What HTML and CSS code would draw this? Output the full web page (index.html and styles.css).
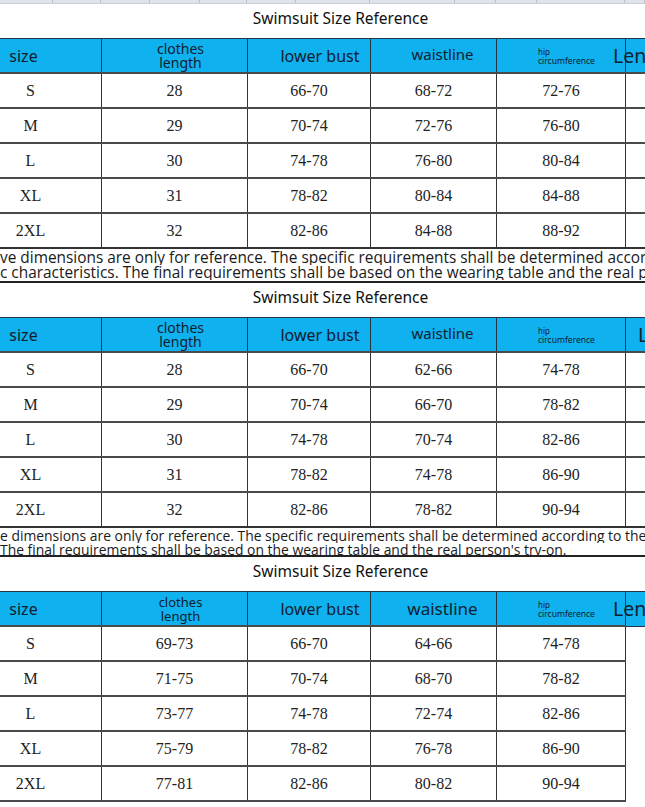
FILE: index.html
```html
<!DOCTYPE html>
<html lang="en">
<head>
<meta charset="utf-8">
<title>Swimsuit Size Reference</title>
<link rel="stylesheet" href="styles.css">
</head>
<body>
<div class="sheet">
  <div class="strip">
    <span></span><span></span><span></span><span></span><span></span><span></span>
    <span></span><span></span><span></span><span></span><span></span><span></span>
  </div>

  <section class="block">
    <h2 class="title">Swimsuit Size Reference</h2>
    <table class="size-table">
      <colgroup>
        <col class="w1"><col class="w2"><col class="w3"><col class="w4"><col class="w5"><col class="w6">
      </colgroup>
      <thead>
        <tr>
          <th><div class="hc h-size">size</div></th>
          <th><div class="hc h-len">clothes<br>length</div></th>
          <th><div class="hc h-bust">lower bust</div></th>
          <th><div class="hc h-waist">waistline</div></th>
          <th><div class="hc h-hip"><span class="hip-a">hip</span><span class="hip-b">circumference</span></div></th>
          <th><div class="hc h-extra shift-left">Length</div></th>
        </tr>
      </thead>
      <tbody>
        <tr><td>S</td><td>28</td><td>66-70</td><td>68-72</td><td>72-76</td><td></td></tr>
        <tr><td>M</td><td>29</td><td>70-74</td><td>72-76</td><td>76-80</td><td></td></tr>
        <tr><td>L</td><td>30</td><td>74-78</td><td>76-80</td><td>80-84</td><td></td></tr>
        <tr><td>XL</td><td>31</td><td>78-82</td><td>80-84</td><td>84-88</td><td></td></tr>
        <tr><td>2XL</td><td>32</td><td>82-86</td><td>84-88</td><td>88-92</td><td></td></tr>
      </tbody>
    </table>
    <div class="note note-tall">
      <div class="note-line">ve dimensions are only for reference. The specific requirements shall be determined according to the individual's</div>
      <div class="note-line">c characteristics. The final requirements shall be based on the wearing table and the real person's try-on.</div>
    </div>
  </section>

  <section class="block">
    <h2 class="title">Swimsuit Size Reference</h2>
    <table class="size-table">
      <colgroup>
        <col class="w1"><col class="w2"><col class="w3"><col class="w4"><col class="w5"><col class="w6">
      </colgroup>
      <thead>
        <tr>
          <th><div class="hc h-size">size</div></th>
          <th><div class="hc h-len">clothes<br>length</div></th>
          <th><div class="hc h-bust">lower bust</div></th>
          <th><div class="hc h-waist">waistline</div></th>
          <th><div class="hc h-hip"><span class="hip-a">hip</span><span class="hip-b">circumference</span></div></th>
          <th><div class="hc h-extra shift-right">Length</div></th>
        </tr>
      </thead>
      <tbody>
        <tr><td>S</td><td>28</td><td>66-70</td><td>62-66</td><td>74-78</td><td></td></tr>
        <tr><td>M</td><td>29</td><td>70-74</td><td>66-70</td><td>78-82</td><td></td></tr>
        <tr><td>L</td><td>30</td><td>74-78</td><td>70-74</td><td>82-86</td><td></td></tr>
        <tr><td>XL</td><td>31</td><td>78-82</td><td>74-78</td><td>86-90</td><td></td></tr>
        <tr><td>2XL</td><td>32</td><td>82-86</td><td>78-82</td><td>90-94</td><td></td></tr>
      </tbody>
    </table>
    <div class="note note-short">
      <div class="note-line">e dimensions are only for reference. The specific requirements shall be determined according to the individual's</div>
      <div class="note-line">The final requirements shall be based on the wearing table and the real person's try-on.</div>
    </div>
  </section>

  <section class="block">
    <h2 class="title">Swimsuit Size Reference</h2>
    <table class="size-table open-end">
      <colgroup>
        <col class="w1"><col class="w2"><col class="w3"><col class="w4"><col class="w5"><col class="w6">
      </colgroup>
      <thead>
        <tr>
          <th><div class="hc h-size">size</div></th>
          <th><div class="hc h-len small">clothes<br>length</div></th>
          <th><div class="hc h-bust">lower bust</div></th>
          <th><div class="hc h-waist big">waistline</div></th>
          <th><div class="hc h-hip"><span class="hip-a">hip</span><span class="hip-b">circumference</span></div></th>
          <th><div class="hc h-extra shift-left">Length</div></th>
        </tr>
      </thead>
      <tbody>
        <tr><td>S</td><td>69-73</td><td>66-70</td><td>64-66</td><td>74-78</td><td></td></tr>
        <tr><td>M</td><td>71-75</td><td>70-74</td><td>68-70</td><td>78-82</td><td></td></tr>
        <tr><td>L</td><td>73-77</td><td>74-78</td><td>72-74</td><td>82-86</td><td></td></tr>
        <tr><td>XL</td><td>75-79</td><td>78-82</td><td>76-78</td><td>86-90</td><td></td></tr>
        <tr><td>2XL</td><td>77-81</td><td>82-86</td><td>80-82</td><td>90-94</td><td></td></tr>
      </tbody>
    </table>
  </section>
</div>
</body>
</html>
```
FILE: styles.css
```css
html, body {
  margin: 0;
  padding: 0;
  background: #ffffff;
}

.sheet {
  width: 645px;
  height: 807px;
  overflow: hidden;
  background: #ffffff;
  color: #1e1e1e;
}

.strip {
  height: 4px;
  display: grid;
  grid-template-columns: 53px 48px 49px 50px 47px 49px 74px 85px 41px 41px 88px 20px;
  background: #dfe4ea;
  border-bottom: 1px solid #c9d0d8;
  box-sizing: border-box;
}

.strip span {
  border-right: 1px solid #b9c1ca;
}

.title {
  margin: 0;
  height: 34px;
  padding: 4px 0 0 36px;
  box-sizing: border-box;
  text-align: center;
  font-family: "Noto Sans", "Liberation Sans", sans-serif;
  font-weight: 400;
  font-size: 15.5px;
  line-height: 20px;
  color: #111;
}

.size-table {
  border-collapse: collapse;
  table-layout: fixed;
  width: 766px;
  margin-left: -41px;
}

.w1 { width: 142px; }
.w2 { width: 146px; }
.w3 { width: 123px; }
.w4 { width: 126px; }
.w5 { width: 129px; }
.w6 { width: 100px; }

.size-table th {
  padding: 0;
  background: #0fb2ee;
  border: 1px solid #243447;
  font-family: "Noto Sans", "Liberation Sans", sans-serif;
  font-weight: 400;
  color: #10202e;
  vertical-align: middle;
  white-space: nowrap;
}

.hc {
  height: 33px;
  display: flex;
  flex-direction: column;
  align-items: center;
  justify-content: center;
  font-size: 16px;
  line-height: 16px;
}

.size-table td {
  height: 33px;
  padding: 0;
  border: 1px solid #333;
  border-top: 2px solid #4a4a4a;
  font-family: "Liberation Serif", "DejaVu Serif", serif;
  font-size: 16px;
  line-height: 18px;
  color: #222;
  text-align: center;
  vertical-align: middle;
}

.h-size {
  padding-right: 14px;
}

.h-len {
  font-size: 14px;
  line-height: 14px;
  padding-left: 12px;
}

.h-len.small {
  font-size: 13px;
  line-height: 14px;
}

.h-bust {
  padding-left: 22px;
}

.h-waist {
  font-size: 15px;
  padding-left: 18px;
  padding-bottom: 4px;
  box-sizing: border-box;
}

.h-waist.big {
  font-size: 17px;
  padding-bottom: 0;
}

.h-hip {
  align-items: flex-start;
  padding-left: 41px;
}

.hip-a,
.hip-b {
  display: block;
  line-height: 9px;
}

.hip-a {
  font-size: 8px;
}

.hip-b {
  font-size: 8.5px;
}

.h-extra {
  align-items: flex-start;
  font-size: 19.5px;
  line-height: 20px;
}

.shift-left {
  margin-left: -13px;
}

.shift-right {
  margin-left: 12px;
}

.open-end tbody td:last-child {
  border-top: none;
  border-bottom: none;
  border-right: none;
}

.open-end tbody tr:last-child td {
  border-bottom: 2px solid #4a4a4a;
}

.open-end tbody tr:last-child td:last-child {
  border-bottom: none;
}

.note {
  height: 30px;
  box-sizing: border-box;
  border-top: 1px solid #333;
  border-bottom: 2px solid #222;
  overflow: hidden;
  font-family: "Open Sans", "Noto Sans", sans-serif;
  font-size: 15.4px;
  color: #1a1a1a;
}

.note-tall {
  height: 35px;
  padding-top: 1px;
}

.note-short {
  font-size: 13.9px;
  padding-top: 1px;
}

.note-line {
  white-space: nowrap;
  overflow: hidden;
  line-height: 14px;
}

.note-tall .note-line {
  line-height: 15px;
}
```
